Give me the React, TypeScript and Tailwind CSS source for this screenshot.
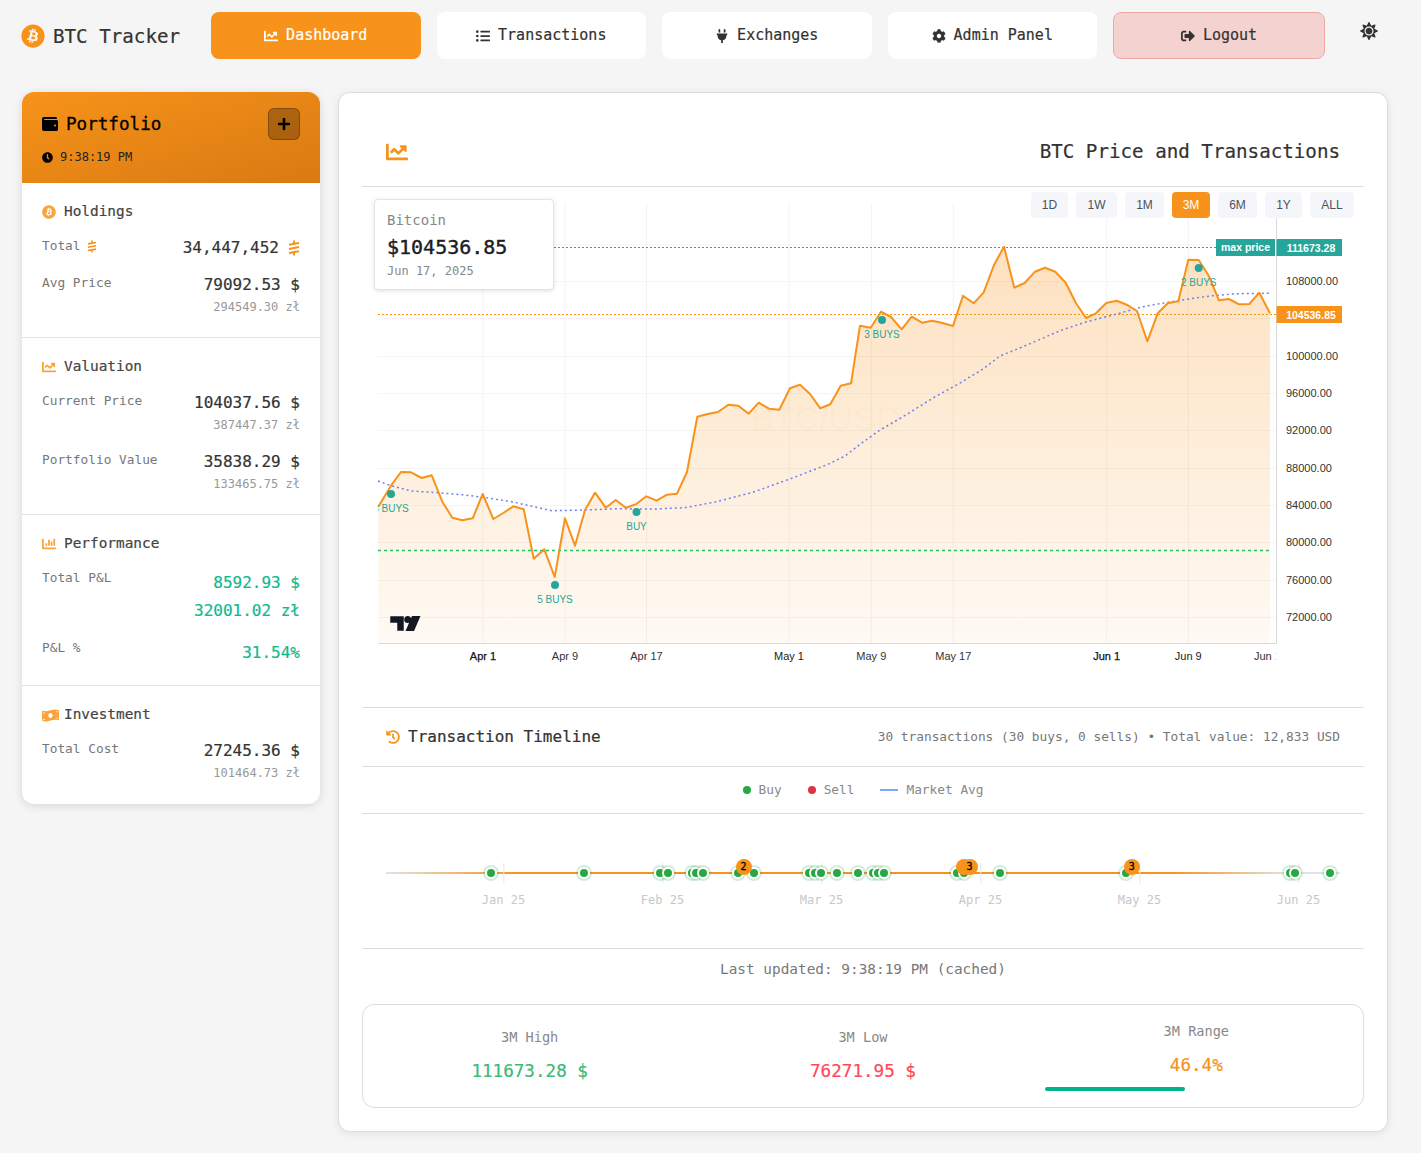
import React from 'react';
import {
  FaBitcoin, FaChartLine, FaListUl, FaPlug, FaCog, FaSignOutAlt, FaSun, FaWallet, FaPlus, FaClock,
  FaChartBar, FaMoneyBillWave, FaHistory,
} from 'react-icons/fa';

const price = '378.3,506.7 391,485.7 401,472 411,472.3 421.7,478 431.7,475.3 442.3,501.7 452.3,517.7 462.3,520.3 472.7,518.3 482.7,494 493.3,519 503.3,513 513.3,506.3 523.7,509.3 533.7,558.7 544.3,549.3 554.7,577 565,518.3 575,545.7 585,510 595,492.7 605.7,507.7 615.7,500 626,507.7 636,504.3 646.3,496.3 656.7,500.7 667,494.7 677,493.7 687,472 697.3,416.7 707.7,414 718,412 728.3,404.7 738.3,405.7 748.7,413.7 758.7,402.7 769,408.7 779.3,409.7 790,388.3 800,384.7 810,394 820.3,408.3 830.3,404.3 840.7,385.7 851,383.3 860,325.7 870.7,327.7 881,311.7 891,317 901.7,329.3 911.7,316.7 922,322.7 932.3,320.7 942.7,323 953,326 963,295.7 973.7,303.3 983.7,292.3 994,265 1004,246.7 1014.3,287.7 1024.7,283 1035,271.7 1045,267.7 1055.3,271.7 1065.7,282.7 1076,303.3 1086,318 1096,313.3 1106.3,303 1116.7,300.7 1126.7,304.7 1137,311 1147.3,341.3 1157.7,313.3 1167.7,303.3 1178.3,301.3 1188.3,259.7 1198.7,260 1208.7,275.7 1219,300.3 1229,299 1239,304.3 1249.3,304 1259.3,292.7 1270,313.3';
const avg = '378,481 391,485.7 411.7,491 438,492.7 465,495 482.7,497.3 511.7,501.7 551.7,510.7 585,510 618,508.7 655,509 685,507.7 715,502 751.7,492.7 791.7,478.3 828,464.3 845,456 860,444.3 880,430 903,416.7 933,398 960,383 983,369 1000,356 1027,345 1060,330.7 1086.7,321.7 1116.7,314 1143,306.7 1176.7,300.7 1210,296 1236.7,293.7 1270,293.3';

const gridY = [244, 281, 318, 356, 393, 430, 468, 505, 542, 580, 617];
const gridX = [483, 565, 646.5, 789, 871.3, 953.3, 1106.7, 1188.3];
const axisLabels = [
  ['108000.00', 281], ['100000.00', 356], ['96000.00', 393], ['92000.00', 430], ['88000.00', 468],
  ['84000.00', 505], ['80000.00', 542], ['76000.00', 580], ['72000.00', 617],
] as const;
const dateLabels = [
  ['Apr 1', 483, '#111'], ['Apr 9', 565, '#333'], ['Apr 17', 646.5, '#333'], ['May 1', 789, '#222'],
  ['May 9', 871.3, '#333'], ['May 17', 953.3, '#333'], ['Jun 1', 1106.7, '#111'], ['Jun 9', 1188.3, '#222'],
] as const;
const markers = [
  [391, 494, '3 BUYS', 508], [555, 585, '5 BUYS', 599], [636.5, 512, 'BUY', 526],
  [882, 320, '3 BUYS', 334], [1198.7, 268, '2 BUYS', 282],
] as const;

const ranges = [
  { label: '1D', cls: 'w-[37px] bg-[#f4f6fa] text-[#4a5260]' },
  { label: '1W', cls: 'w-[41px] bg-[#f4f6fa] text-[#4a5260]' },
  { label: '1M', cls: 'w-[39px] bg-[#f4f6fa] text-[#4a5260]' },
  { label: '3M', cls: 'w-[38px] bg-[#f7931a] text-white' },
  { label: '6M', cls: 'w-[39px] bg-[#f4f6fa] text-[#4a5260]' },
  { label: '1Y', cls: 'w-[37px] bg-[#f4f6fa] text-[#4a5260]' },
  { label: 'ALL', cls: 'w-[44px] bg-[#f4f6fa] text-[#4a5260]' },
];

const dots = [491, 584, 660, 667.7, 692, 696, 703, 737.7, 754, 809, 815, 821, 837, 858, 873.3, 878, 883.7, 957.3, 964, 1000, 1125.7, 1290, 1295, 1330];
const badges = [[743.5, '2'], [964, ''], [969.6, '3'], [1131.7, '3']] as const;
const ticks = [['Jan 25', 503.5], ['Feb 25', 662.5], ['Mar 25', 821.5], ['Apr 25', 980.5], ['May 25', 1139.5], ['Jun 25', 1298.5]] as const;

const SatsIcon = ({ className }: { className: string }) => (
  <svg viewBox="0 0 12 16" className={className} fill="none" stroke="#f7931a" strokeWidth="2">
    <path d="M1 4.8 11 3M1 8.9 11 7.1M1 13 11 11.2M6 0.5V3M6 13v2.5" />
  </svg>
);

const SectionTitle = ({ icon, children }: { icon: React.ReactNode; children: React.ReactNode }) => (
  <div className="flex items-center h-4 mb-4 text-[14.4px] text-[#444] [-webkit-text-stroke:0.2px]">
    <span className="w-[22px] text-[#f9a33a] text-[14px] flex">{icon}</span>
    {children}
  </div>
);

const ValueRow = ({ label, value, sub }: { label: string; value: string; sub: string }) => (
  <div className="flex justify-between">
    <span className="text-[12.8px] leading-5 text-[#777]">{label}</span>
    <div className="text-right">
      <div className="text-base leading-6 text-[#333] [-webkit-text-stroke:0.2px]">{value}</div>
      <div className="text-xs leading-[18px] mt-px text-[#999]">{sub}</div>
    </div>
  </div>
);

const navButtons = [
  { label: 'Dashboard', icon: <FaChartLine />, cls: 'w-[209.5px] bg-[#f7931a] text-white' },
  { label: 'Transactions', icon: <FaListUl />, cls: 'w-[209.5px] bg-white text-[#333]' },
  { label: 'Exchanges', icon: <FaPlug />, cls: 'w-[209.5px] bg-white text-[#333]' },
  { label: 'Admin Panel', icon: <FaCog />, cls: 'w-[209.5px] bg-white text-[#333]' },
  { label: 'Logout', icon: <FaSignOutAlt />, cls: 'w-[212px] bg-[#f3d2d0] border border-[#f0a8a4] text-[#333]' },
];

const PriceChart = () => (
  <svg viewBox="362 187 1002 520" className="absolute inset-0 w-[1002px] h-[520px]">
    <defs>
      <linearGradient id="area" gradientUnits="userSpaceOnUse" x1="0" y1="246" x2="0" y2="643">
        <stop offset="0" stopColor="#f7931a" stopOpacity="0.28" />
        <stop offset="1" stopColor="#f7931a" stopOpacity="0.05" />
      </linearGradient>
      <clipPath id="plot"><rect x="378" y="187" width="898" height="456" /></clipPath>
      <clipPath id="dates"><rect x="378" y="644" width="898" height="24" /></clipPath>
    </defs>
    {gridY.map((y) => <line key={y} x1="378" x2="1276" y1={y + 0.5} y2={y + 0.5} stroke="#f5f5f5" />)}
    {gridX.map((x) => <line key={x} x1={x} x2={x} y1="203" y2="643" stroke="#f3f3f3" />)}
    <text x="826" y="430" textAnchor="middle" fontSize="34" fontFamily="Liberation Sans, sans-serif" fill="#f7931a" fillOpacity="0.05">BTC/USD</text>
    <polygon points={`378.3,643 ${price} 1270,643`} fill="url(#area)" />
    <line x1="378" x2="1216" y1="247.5" y2="247.5" stroke="#26a69a" strokeDasharray="2 2" />
    <line x1="378" x2="1276" y1="314.5" y2="314.5" stroke="#f7931a" strokeDasharray="2 2" />
    <line x1="378" x2="1271" y1="550.5" y2="550.5" stroke="#22c55e" strokeWidth="1.5" strokeDasharray="3 3" />
    <polyline points={avg} fill="none" stroke="#6f7ff2" strokeWidth="1.5" strokeDasharray="2 3" />
    <polyline points={price} fill="none" stroke="#f7931a" strokeWidth="2" strokeLinejoin="round" />
    <g clipPath="url(#plot)" fontFamily="Liberation Sans, sans-serif" fontSize="10" fill="#26a69a" textAnchor="middle">
      {markers.map(([x, y, label, ty]) => (
        <g key={x}>
          <circle cx={x} cy={y} r="4" />
          <text x={x} y={ty + 4}>{label}</text>
        </g>
      ))}
    </g>
    <g fill="#131722">
      <path d="M390 616h14v15h-7v-8h-7z" stroke="#fff" strokeWidth="0.5" />
      <circle cx="407.7" cy="619.6" r="3.5" />
      <path d="M412 616h8.5l-6.5 15h-8.5z" />
    </g>
    <line x1="378" x2="1276.5" y1="643.5" y2="643.5" stroke="#d9d9d9" />
    <line x1="1276.5" x2="1276.5" y1="205" y2="643.5" stroke="#d9d9d9" />
    <g fontFamily="Liberation Sans, sans-serif" fontSize="11" fill="#333">
      {axisLabels.map(([label, y]) => <text key={label} x="1286" y={y + 4}>{label}</text>)}
      {dateLabels.map(([label, x, color]) => (
        <text key={label} x={x} y="660" textAnchor="middle" fill={color} stroke={color === '#111' ? '#111' : 'none'} strokeWidth="0.25">{label}</text>
      ))}
      <text x="1254" y="660" clipPath="url(#dates)">Jun 17</text>
      <rect x="1216" y="239" width="59" height="17" fill="#26a69a" />
      <text x="1245.5" y="251" textAnchor="middle" fill="#fff" fontWeight="700" fontSize="10.5">max price</text>
      <rect x="1276.5" y="239" width="65.5" height="17" fill="#26a69a" />
      <text x="1311" y="252" textAnchor="middle" fill="#fff" fontWeight="700" fontSize="10.5">111673.28</text>
      <rect x="1276.5" y="306" width="65.5" height="17" fill="#f7931a" />
      <text x="1311" y="319" textAnchor="middle" fill="#fff" fontWeight="700" fontSize="10.5">104536.85</text>
    </g>
  </svg>
);

const App = () => (
  <div className="min-h-[1153px] bg-[#f5f5f5] font-['DejaVu_Sans_Mono',monospace] pb-[21px]">
    <nav className="flex items-center pt-3 pl-[21px]">
      <div className="w-[158px] mr-8 flex items-center gap-2 whitespace-nowrap text-[19.2px] leading-[26px] text-[#333] [-webkit-text-stroke:0.2px]">
        <FaBitcoin className="text-[#f7931a] text-2xl shrink-0" />
        <span className="pt-0.5">BTC Tracker</span>
      </div>
      <div className="flex gap-4">
        {navButtons.map((b) => (
          <button key={b.label} className={`h-[47px] rounded-lg flex items-center justify-center gap-2 text-[15px] [-webkit-text-stroke:0.2px] ${b.cls}`}>
            <span className="text-sm">{b.icon}</span>
            {b.label}
          </button>
        ))}
      </div>
      <FaSun className="ml-[35px] mb-[9px] text-lg text-[#333]" />
    </nav>

    <div className="flex items-start gap-[18px] mt-[33px] ml-[22px]">
      <aside className="w-[298px] h-[712px] bg-white rounded-xl overflow-hidden shadow-[0_2px_10px_rgba(0,0,0,0.12)]">
        <div className="h-[91px] bg-gradient-to-br from-[#f7931a] to-[#d97a12] px-5 pt-4">
          <div className="flex items-center justify-between">
            <div className="flex items-center gap-2 text-[17.6px] text-black [-webkit-text-stroke:0.3px]">
              <FaWallet className="text-base" />
              Portfolio
            </div>
            <button className="w-8 h-8 rounded-md bg-black/25 border border-black/25 flex items-center justify-center text-black text-sm">
              <FaPlus />
            </button>
          </div>
          <div className="flex items-center gap-[7px] mt-[9px] text-xs text-[#222]">
            <FaClock className="text-black text-[11px]" />
            9:38:19 PM
          </div>
        </div>

        <section className="px-5 pt-[21px] h-[155px] border-b border-[#e2e2e2]">
          <SectionTitle icon={<FaBitcoin />}>Holdings</SectionTitle>
          <div className="flex justify-between mb-[13px]">
            <span className="flex items-center h-5 gap-1.5 text-[12.8px] text-[#777]">
              Total <SatsIcon className="w-[10px] h-[13px]" />
            </span>
            <span className="flex items-center h-6 gap-[9px] text-base text-[#333] [-webkit-text-stroke:0.2px]">
              34,447,452 <SatsIcon className="w-3 h-4" />
            </span>
          </div>
          <ValueRow label="Avg Price" value="79092.53 $" sub="294549.30 zł" />
        </section>

        <section className="px-5 pt-[21px] h-[177px] border-b border-[#e2e2e2]">
          <SectionTitle icon={<FaChartLine />}>Valuation</SectionTitle>
          <div className="flex flex-col gap-4">
            <ValueRow label="Current Price" value="104037.56 $" sub="387447.37 zł" />
            <ValueRow label="Portfolio Value" value="35838.29 $" sub="133465.75 zł" />
          </div>
        </section>

        <section className="px-5 pt-[21px] h-[171px] border-b border-[#e2e2e2]">
          <SectionTitle icon={<FaChartBar />}>Performance</SectionTitle>
          <div className="flex justify-between mb-[13px]">
            <span className="text-[12.8px] leading-5 text-[#777]">Total P&amp;L</span>
            <div className="text-right text-base leading-7 mt-px text-[#10b98f] [-webkit-text-stroke:0.2px]">
              <div>8592.93 $</div>
              <div>32001.02 zł</div>
            </div>
          </div>
          <div className="flex justify-between">
            <span className="text-[12.8px] leading-5 text-[#777]">P&amp;L %</span>
            <span className="text-base leading-7 mt-px text-[#10b98f] [-webkit-text-stroke:0.2px]">31.54%</span>
          </div>
        </section>

        <section className="px-5 pt-[21px]">
          <SectionTitle icon={<FaMoneyBillWave className="text-[17px]" />}>Investment</SectionTitle>
          <ValueRow label="Total Cost" value="27245.36 $" sub="101464.73 zł" />
        </section>
      </aside>

      <main className="w-[1050px] h-[1040px] bg-white rounded-xl border border-[#dcdcdc] shadow-[0_2px_8px_rgba(0,0,0,0.08)] px-[23px]">
        <header className="h-[94px] pt-[26px] px-6 border-b border-[#ddd] flex items-center justify-between">
          <FaChartLine className="text-[#f7931a] text-[22px] -mt-0.5" />
          <h1 className="text-[19.2px] text-[#333] [-webkit-text-stroke:0.2px]">BTC Price and Transactions</h1>
        </header>

        <div className="relative h-[520px]">
          <PriceChart />
          <div className="absolute top-[5px] right-[10px] flex gap-2 font-['Liberation_Sans',sans-serif] text-xs">
            {ranges.map((r) => (
              <button key={r.label} className={`h-[26px] rounded ${r.cls}`}>{r.label}</button>
            ))}
          </div>
          <div className="absolute left-3 top-3 w-[179.5px] h-[91px] bg-white border border-[#e4e4e4] rounded shadow-[0_1px_4px_rgba(0,0,0,0.12)] pl-3 pt-[9.5px]">
            <div className="text-sm leading-5 text-[#888]">Bitcoin</div>
            <div className="text-xl leading-7 mt-[3px] text-[#1a1d26] [-webkit-text-stroke:0.4px]">$104536.85</div>
            <div className="text-xs leading-4 mt-[2px] text-[#888]">Jun 17, 2025</div>
          </div>
        </div>

        <div className="h-[60px] border-y border-[#ddd] flex items-center justify-between px-6">
          <div className="flex items-center gap-2 text-base text-[#333] [-webkit-text-stroke:0.2px]">
            <FaHistory className="text-[#f7931a] text-sm" />
            Transaction Timeline
          </div>
          <span className="text-[12.8px] text-[#777]">30 transactions (30 buys, 0 sells) • Total value: 12,833 USD</span>
        </div>

        <div className="h-[47px] border-b border-[#ddd] flex items-center justify-center gap-[26px] text-[12.8px] text-[#888]">
          <span className="flex items-center gap-2"><i className="w-2 h-2 rounded-full bg-[#28a745]" />Buy</span>
          <span className="flex items-center gap-2"><i className="w-2 h-2 rounded-full bg-[#dc3545]" />Sell</span>
          <span className="flex items-center gap-2"><i className="w-[18px] h-0.5 bg-[#7aa9f0]" />Market Avg</span>
        </div>

        <div className="relative h-[135px] border-b border-[#ddd]">
          {/* left offsets are relative to the 362px content edge */}
          <div className="absolute left-6 right-6 top-[58px] h-0.5 bg-[linear-gradient(to_right,#e2e2e2_0%,#f7931a_14%,#f7931a_82%,#e2e2e2_95%)]" />
          {ticks.map(([label, x]) => (
            <div key={label} className="absolute top-[49px] flex flex-col items-center -translate-x-1/2" style={{ left: x - 362 }}>
              <i className="w-px h-5 bg-[#e6e6e6]" />
              <span className="mt-[9px] text-xs leading-4 text-[#c8c8c8]">{label}</span>
            </div>
          ))}
          {dots.map((x) => (
            <i key={x} className="absolute top-[53px] w-3 h-3 -translate-x-1/2 rounded-full border-2 border-white bg-[#28a745] shadow-[0_0_0_2px_rgba(40,167,69,0.2)]" style={{ left: x - 362 }} />
          ))}
          {badges.map(([x, n]) => (
            <span key={x} className="absolute top-[44.5px] w-4 h-4 -translate-x-1/2 rounded-full bg-[#f7931a] text-black text-[10px] leading-4 text-center [-webkit-text-stroke:0.3px]" style={{ left: x - 362 }}>{n}</span>
          ))}
        </div>

        <div className="h-[55px] pt-[10px] text-center text-[14.4px] leading-5 text-[#777]">Last updated: 9:38:19 PM (cached)</div>

        <div className="h-[104px] grid grid-cols-3 border border-[#ddd] rounded-xl">
          <div className="flex flex-col items-center pt-[22px]">
            <span className="text-[13.6px] leading-5 text-[#888]">3M High</span>
            <span className="mt-[11px] text-[17.6px] leading-[26px] text-[#3cba74] [-webkit-text-stroke:0.2px]">111673.28 $</span>
          </div>
          <div className="flex flex-col items-center pt-[22px]">
            <span className="text-[13.6px] leading-5 text-[#888]">3M Low</span>
            <span className="mt-[11px] text-[17.6px] leading-[26px] text-[#ff4757] [-webkit-text-stroke:0.2px]">76271.95 $</span>
          </div>
          <div className="flex flex-col items-center pt-4 px-[15px]">
            <span className="text-[13.6px] leading-5 text-[#888]">3M Range</span>
            <span className="mt-[11px] text-[17.6px] leading-[26px] text-[#f7931a] [-webkit-text-stroke:0.2px]">46.4%</span>
            <i className="mt-[9px] self-start w-[140px] h-1 rounded-sm bg-[#00b48a]" />
          </div>
        </div>
      </main>
    </div>
  </div>
);

export default App;
